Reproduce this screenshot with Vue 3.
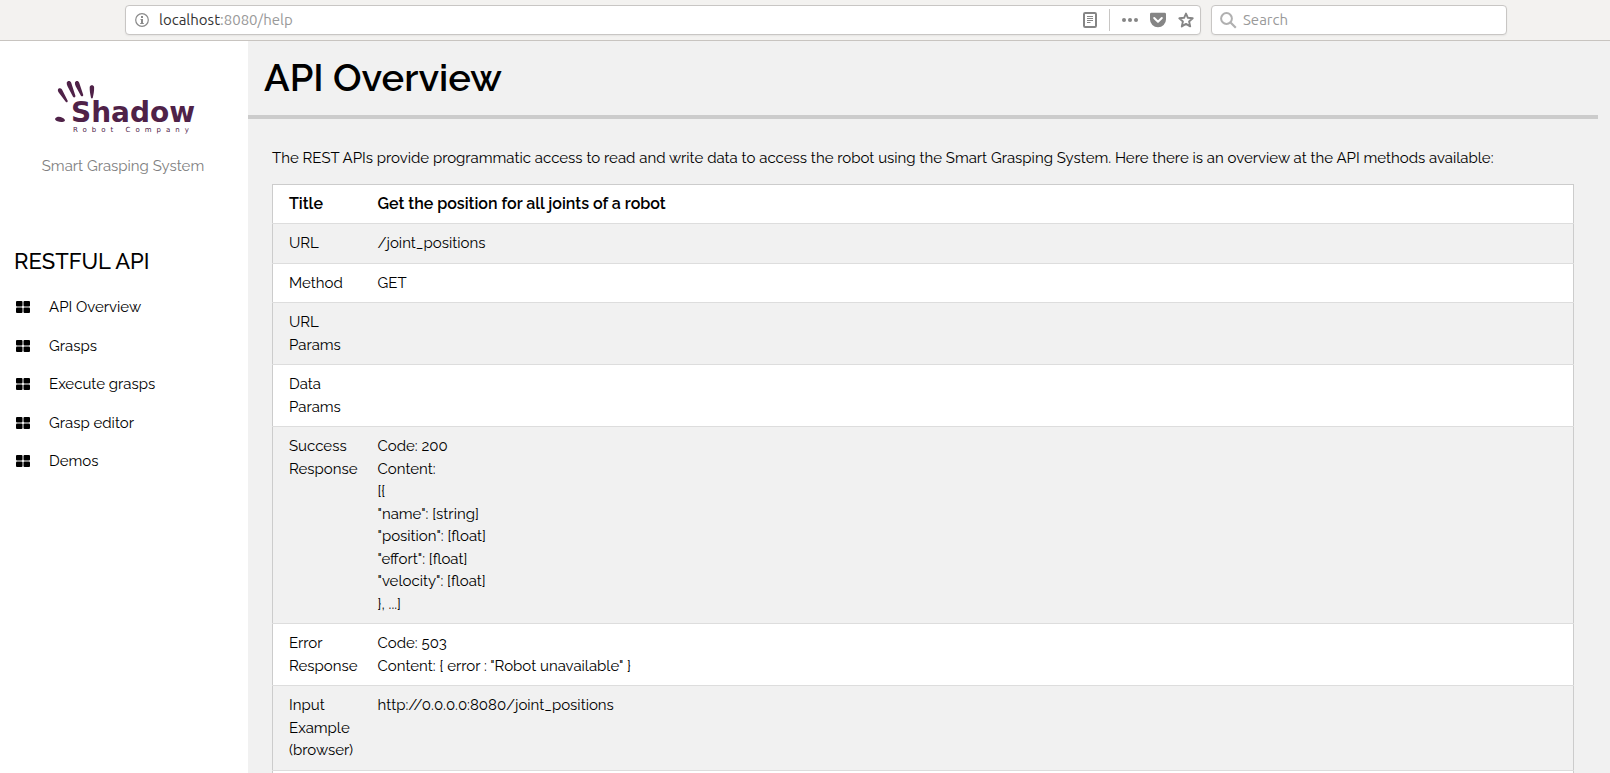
<script setup>
import { ref } from 'vue'

const query = ref('')

const links = ['API Overview', 'Grasps', 'Execute grasps', 'Grasp editor', 'Demos']

const rows = [
  { label: 'URL', lines: ['/joint_positions'] },
  { label: 'Method', lines: ['GET'] },
  { label: 'URL Params', lines: [] },
  { label: 'Data Params', lines: [] },
  {
    label: 'Success Response',
    lines: [
      'Code: 200',
      'Content:',
      '[{',
      '"name": [string]',
      '"position": [float]',
      '"effort": [float]',
      '"velocity": [float]',
      '}, ...]',
    ],
  },
  { label: 'Error Response', lines: ['Code: 503', 'Content: { error : "Robot unavailable" }'] },
  { label: 'Input Example (browser)', lines: ['http://0.0.0.0:8080/joint_positions'] },
  { label: '', lines: [] },
]
</script>

<template>
  <div class="window">
    <header class="toolbar">
      <div class="field address">
        <button class="icon-button" type="button" aria-label="Site information">
          <svg width="14" height="14" viewBox="0 0 14 14">
            <circle cx="7" cy="7" r="6.3" fill="none" stroke="#8a8a8a" stroke-width="1.2" />
            <rect x="6" y="3" width="2" height="2" fill="#8a8a8a" />
            <path d="M5.5 6H8v4h.8v1H5.2v-1H6V7h-.5z" fill="#8a8a8a" />
          </svg>
        </button>
        <a class="url" href="#"><span class="host">localhost</span>:8080/help</a>
        <div class="actions">
          <button class="icon-button" type="button" aria-label="Reader view">
            <svg width="14" height="16" viewBox="0 0 14 16">
              <rect x="1" y="1" width="12" height="14" rx="1.2" fill="none" stroke="#858585" stroke-width="2" />
              <path d="M4 4.5h6M4 6.5h6M4 8.5h6M4 10.5h3.500" stroke="#858585" stroke-width="1" />
            </svg>
          </button>
          <span class="separator"></span>
          <button class="icon-button" type="button" aria-label="Page actions">
            <svg width="16" height="16" viewBox="0 0 16 16" fill="#858585">
              <circle cx="2" cy="8" r="2" /><circle cx="8" cy="8" r="2" /><circle cx="14" cy="8" r="2" />
            </svg>
          </button>
          <button class="icon-button" type="button" aria-label="Save to Pocket">
            <svg width="16" height="16" viewBox="0 0 16 16">
              <path d="M1.500 .8h13A1.400 1.400 0 0 1 16 2.200V7.500a8 7.800 0 0 1-16 0V2.200A1.400 1.400 0 0 1 1.500.8z" fill="#858585" />
              <path d="M4.200 6L8 9.700 11.800 6" fill="none" stroke="#fff" stroke-width="2" stroke-linecap="round" stroke-linejoin="round" />
            </svg>
          </button>
          <button class="icon-button" type="button" aria-label="Bookmark this page">
            <svg width="16" height="16" viewBox="0 0 16 16">
              <path d="M8 1.600l1.900 4.200 4.800.5-3.600 3.200 1.100 4.900L8 11.900l-4.200 2.500 1.100-4.900L1.300 6.300l4.800-.5z" fill="none" stroke="#858585" stroke-width="1.900" stroke-linejoin="round" />
            </svg>
          </button>
        </div>
      </div>
      <label class="field search">
        <svg width="17" height="17" viewBox="0 0 17 17">
          <circle cx="6.500" cy="6.500" r="5.400" fill="none" stroke="#b0b0b0" stroke-width="2" />
          <path d="M10.500 10.500L15.800 15.800" stroke="#b0b0b0" stroke-width="2.200" />
        </svg>
        <input v-model="query" type="text" placeholder="Search" aria-label="Search" />
      </label>
    </header>

    <div class="page">
      <aside class="sidebar">
        <div class="brand">
          <svg class="logo" width="152" height="56" viewBox="0 0 152 56" role="img" aria-label="Shadow Robot Company">
            <g fill="#4f2248">
              <path d="M10.900 11.800c.6-1.900 3-1.900 4.100-.2l5.700 11.200c.2 1.500-1 2-2 1l-6.800-9c-.7-1-1.200-2-1-3z" />
              <path d="M19.700 4.700c.6-2.400 3.700-2.400 4.500 0l4.200 13c.2 1.700-1.500 2.300-2.400 1l-5.500-10.500c-.5-1.200-.9-2.400-.8-3.500z" />
              <path d="M27.900 4.700c.6-2.300 3.600-2.200 4.300 0l4 12c.2 1.700-1.400 2.200-2.300 1l-5.200-9.500c-.5-1.200-.9-2.400-.8-3.500z" />
              <path d="M42.700 9c.4-2.500 4-2.500 4.400 0 .2 4-.6 7.500-1.300 10.700-.3 1-1.500 1-1.800 0-.7-3.500-1.500-7-1.300-10.700z" />
              <path d="M8.200 40.500c1.500-2.200 5-2 7.200-.7 2 1 3.200 2.300 2.300 3.200-1.500 1.500-5 1.200-7.200.3-1.700-.7-2.900-1.700-2.300-2.800z" />
              <text class="logo-name" x="24" y="44">Shadow</text>
              <text class="logo-sub" x="26" y="54">Robot Company</text>
            </g>
          </svg>
          <p class="tagline">Smart Grasping System</p>
        </div>
        <h2>RESTFUL API</h2>
        <nav>
          <a v-for="link in links" :key="link" href="#">
            <svg width="14" height="12" viewBox="0 0 14 12">
              <rect width="6.500" height="5.500" rx="1" />
              <rect x="7.500" width="6.500" height="5.500" rx="1" />
              <rect y="6.500" width="6.500" height="5.500" rx="1" />
              <rect x="7.500" y="6.500" width="6.500" height="5.500" rx="1" />
            </svg>
            {{ link }}
          </a>
        </nav>
      </aside>

      <main>
        <h1>API Overview</h1>
        <section>
          <p class="intro">
            The REST APIs provide programmatic access to read and write data to access the robot using the Smart
            Grasping System. Here there is an overview at the API methods available:
          </p>
          <table>
            <thead>
              <tr>
                <th scope="col">Title</th>
                <th scope="col">Get the position for all joints of a robot</th>
              </tr>
            </thead>
            <tbody>
              <tr v-for="(row, i) in rows" :key="i">
                <td>{{ row.label }}</td>
                <td>
                  <div v-for="line in row.lines" :key="line">{{ line }}</div>
                </td>
              </tr>
            </tbody>
          </table>
        </section>
      </main>
    </div>
  </div>
</template>

<style>
body {
  margin: 0;
}
</style>

<style scoped>
* {
  box-sizing: border-box;
}
.window {
  display: flex;
  flex-direction: column;
  height: 100vh;
  overflow: hidden;
  background: #f1f1f1;
  color: #000;
  font-family: Raleway, Lato, sans-serif;
  font-size: 15px;
  line-height: 1.5;
}
.toolbar {
  flex: none;
  display: flex;
  gap: 10px;
  padding: 5px 103px 5px 125px;
  background: #f3f2f0;
  border-bottom: 1px solid #c8c4c0;
  font-family: Ubuntu, "Noto Sans", sans-serif;
}
.field {
  display: flex;
  align-items: center;
  height: 30px;
  background: #fff;
  border: 1px solid #c8c6c4;
  border-radius: 4px;
  box-shadow: 0 1px 2px rgba(0, 0, 0, 0.06);
}
.address {
  flex: 1;
  padding: 0 6px 0 9px;
}
.url {
  flex: 1;
  margin-left: 10px;
  color: #999;
  text-decoration: none;
}
.host {
  color: #333;
}
.actions {
  display: flex;
  align-items: center;
  gap: 12px;
}
.separator {
  width: 1px;
  height: 22px;
  background: #c8c6c4;
}
.icon-button {
  display: flex;
  padding: 0;
  border: 0;
  background: none;
}
.search {
  width: 296px;
  padding: 0 8px;
  gap: 6px;
}
.search input {
  flex: 1;
  min-width: 0;
  padding: 0;
  border: 0;
  outline: 0;
  background: none;
  font: inherit;
}
.search input::placeholder {
  color: #999;
  opacity: 1;
}
.page {
  flex: 1;
  display: flex;
  min-height: 0;
}
.sidebar {
  flex: none;
  width: 248px;
  padding-top: 37px;
  background: #fff;
}
.brand {
  display: flex;
  flex-direction: column;
  align-items: center;
  padding-right: 2px;
}
.logo-name {
  font-family: "DejaVu Sans", sans-serif;
  font-size: 28px;
  font-weight: 700;
}
.logo-sub {
  font-family: "DejaVu Sans", sans-serif;
  font-size: 7px;
  letter-spacing: 5px;
}
.tagline {
  margin: 20px 0 0;
  color: #808080;
  line-height: 24px;
}
h2 {
  margin: 67px 0 11px 14px;
  font-size: 22px;
  font-weight: 500;
  line-height: 32px;
}
nav a {
  display: flex;
  align-items: center;
  gap: 19px;
  padding: 8px 16px;
  color: #000;
  text-decoration: none;
}
main {
  flex: 1;
  min-width: 0;
  margin-right: 12px;
  overflow: hidden;
}
h1 {
  margin: 0;
  padding: 10px 16px;
  border-bottom: 4px solid #ccc;
  font-size: 38px;
  font-weight: 600;
  line-height: 54px;
}
section {
  padding: 28px 24px;
}
.intro {
  margin: 0 0 15px;
  line-height: 22px;
}
table {
  width: 100%;
  border: 1px solid #ccc;
  border-collapse: collapse;
  background: #fff;
}
tr {
  border-bottom: 1px solid #ddd;
}
tbody tr:nth-child(odd) {
  background: #f1f1f1;
}
th,
td {
  padding: 8px;
  text-align: left;
  vertical-align: top;
}
th {
  font-size: 16px;
  font-weight: 600;
  line-height: 22px;
}
th:first-child,
td:first-child {
  width: 97px;
  padding-left: 16px;
}
</style>
